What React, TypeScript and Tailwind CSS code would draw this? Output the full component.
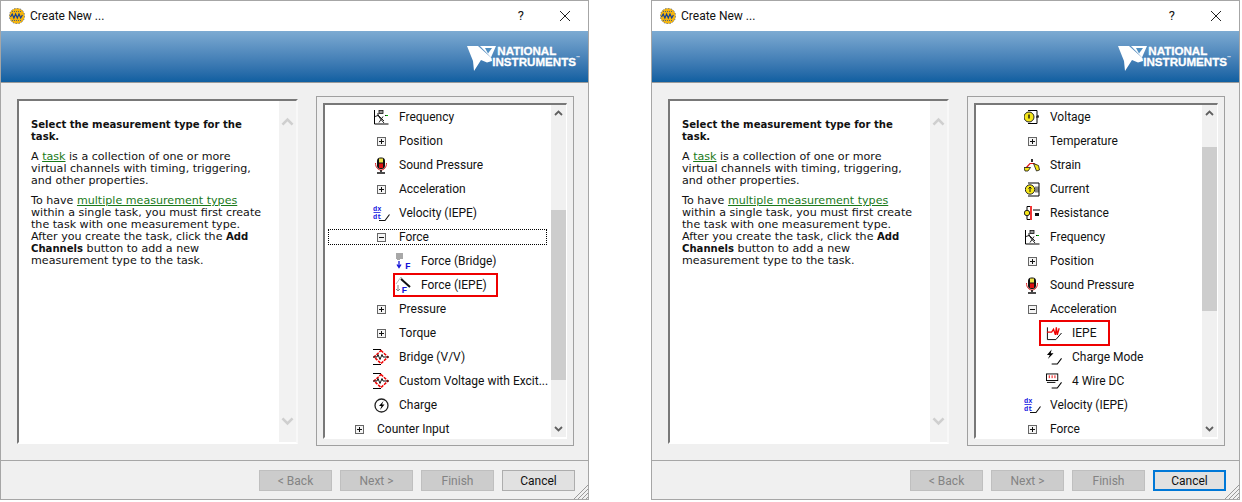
import type { ReactNode } from 'react';

type TreeRow = {
  label: string;
  level: 0 | 1 | 2;
  icon?: ReactNode;
  focused?: boolean;
  highlight?: string;
};

const PlusBox = ({ minus }: { minus?: boolean }) => (
  <svg width="9" height="9" viewBox="0 0 9 9">
    <rect x="0.5" y="0.5" width="8" height="8" fill="#f4f4f4" stroke="#666" />
    <path d={minus ? 'M2 4.5h5' : 'M2 4.5h5M4.5 2v5'} stroke="#111" />
  </svg>
);

const FrequencyIcon = () => (
  <svg width="16" height="16" viewBox="0 0 16 16">
    <path d="M1.5 1v14h14" fill="none" stroke="#000" />
    <path d="M2 7.5l3-1 3 4 3 3.500M5 6l6 6M10 7.500l-4 6" fill="none" stroke="#222" />
    <rect x="6" y="1.5" width="4" height="3" fill="#999" stroke="#111" strokeWidth="0.8" />
    <path d="M5 4v3M12 6.500h3" stroke="#111" />
    <path d="M13 6.500h2" stroke="#0a0" />
  </svg>
);

const MicIcon = () => (
  <svg width="16" height="17" viewBox="0 0 16 17">
    <rect x="4" y="0.500" width="8" height="11.500" rx="3.500" fill="#111" />
    <rect x="6" y="1.500" width="4" height="4" fill="#ece24a" />
    <path d="M6 6.500h4v4.500H6z" fill="#d11" />
    <path d="M2.500 6c0 4.500 2.500 7 5.500 7s5.500-2.500 5.500-7" fill="none" stroke="#d11" strokeWidth="0.900" />
    <path d="M8 13v2M4 16h8" stroke="#111" strokeWidth="1.600" />
  </svg>
);

const VelocityIcon = () => (
  <svg width="17" height="16" viewBox="0 0 17 16" className="overflow-visible">
    <text x="0" y="6" fontSize="7" fontWeight="700" fontFamily="Liberation Mono, monospace" fill="#1414e0">dx</text>
    <path d="M0.500 7.500h7" stroke="#1414e0" strokeWidth="0.800" />
    <text x="0" y="14" fontSize="7" fontWeight="700" fontFamily="Liberation Mono, monospace" fill="#1414e0">dt</text>
    <path d="M6 15.500h6l4.500-6" fill="none" stroke="#111" strokeWidth="1.100" />
  </svg>
);

const ForceBridgeIcon = () => (
  <svg width="17" height="16" viewBox="0 0 17 16" className="overflow-visible">
    <path d="M1 0h7v6H5v1H2V6H1z" fill="#a8a8a8" />
    <path d="M4 8v6M2 11.500l2 3 2-3" fill="none" stroke="#1414d8" strokeWidth="1.300" />
    <text x="10" y="15.500" fontSize="9.500" fontWeight="700" fontFamily="Liberation Mono, monospace" fill="#1414d8">F</text>
  </svg>
);

const ForceIepeIcon = () => (
  <svg width="16" height="16" viewBox="0 0 16 16" className="overflow-visible">
    <path d="M6 0L1 7M6 0l2 3" fill="none" stroke="#bbb" />
    <path d="M6 2l9 8" stroke="#111" strokeWidth="2" />
    <path d="M3 8v6M1 12l2 2 2-2" fill="none" stroke="#888" />
    <text x="6.500" y="16" fontSize="9.500" fontWeight="700" fontFamily="Liberation Mono, monospace" fill="#1414d8">F</text>
  </svg>
);

const BridgeIcon = () => (
  <svg width="16" height="16" viewBox="0 0 16 16">
    <path d="M0 0.500h8M0 15.500h8" stroke="#000" />
    <path d="M8 1.500l7 6.500-7 6.500L1 8z" fill="#fff" stroke="#e00" strokeWidth="1.500" strokeDasharray="3 1" />
    <path d="M0 8h4l1-2.500 2 5 2-5 1 2.500h6" fill="none" stroke="#111" />
  </svg>
);

const ChargeIcon = () => (
  <svg width="15" height="15" viewBox="0 0 15 15">
    <circle cx="7.500" cy="7.500" r="6.500" fill="none" stroke="#222" strokeWidth="1.300" />
    <path d="M9.500 3L5 8h2.500L6 12l4.500-5.500H8z" fill="#000" />
  </svg>
);

const VoltageIcon = () => (
  <svg width="16" height="16" viewBox="0 0 16 16">
    <path d="M4 1.500h9v13H4" fill="none" stroke="#000" />
    <circle cx="5" cy="8" r="5" fill="#f5e61a" stroke="#222" />
    <path d="M5 5.500v4" stroke="#000" strokeWidth="1.300" />
    <path d="M14 6v2M12 8h3" stroke="#000" />
  </svg>
);

const StrainIcon = () => (
  <svg width="16" height="13" viewBox="0 0 16 13">
    <path d="M8 0v3" stroke="#000" strokeWidth="1.600" />
    <path d="M2 9l4-4.500h4l4 4.500" fill="none" stroke="#e01010" strokeWidth="1.200" />
    <path d="M0 8.500h6.500L4 12H1zM9.500 4.500l5 2 1 4.500-3 1z" fill="#f5e61a" stroke="#111" strokeWidth="0.800" />
  </svg>
);

const CurrentIcon = () => (
  <svg width="15" height="15" viewBox="0 0 15 15">
    <path d="M3 1h11v13H3" fill="none" stroke="#000" />
    <circle cx="5" cy="7.500" r="4.700" fill="#f5e61a" stroke="#222" />
    <path d="M5 5v5M3.500 6.500L5 5l1.500 1.500M11 4.500v6M13 4.500v6" fill="none" stroke="#111" />
  </svg>
);

const ResistanceIcon = () => (
  <svg width="16" height="16" viewBox="0 0 16 16">
    <path d="M6 1.500H3v13h3" fill="none" stroke="#000" />
    <path d="M7 1v14" stroke="#e00" strokeWidth="1.600" />
    <circle cx="3" cy="8" r="2.700" fill="#f5e61a" stroke="#222" />
    <path d="M9 5h7" stroke="#000" />
    <rect x="11" y="8" width="4" height="3" fill="#111" />
  </svg>
);

const IepeIcon = () => (
  <svg width="17" height="16" viewBox="0 0 17 16">
    <path d="M1.500 2v13h9l6-7" fill="none" stroke="#000" />
    <path d="M1 7h5l2-3 2 6 1-8 1 8 2-7" fill="none" stroke="#e00" strokeWidth="1.400" />
  </svg>
);

const ChargeModeIcon = () => (
  <svg width="17" height="16" viewBox="0 0 17 16">
    <path d="M6 0L1 6h3L2 10l6-6H5z" fill="#000" />
    <path d="M6 15.500h6l4.500-6" fill="none" stroke="#000" strokeWidth="1.100" />
  </svg>
);

const FourWireIcon = () => (
  <svg width="17" height="16" viewBox="0 0 17 16">
    <rect x="0.500" y="0.500" width="12" height="7" fill="#fff" stroke="#000" />
    <path d="M3.500 2v3M6.500 2v3M9.500 2v3" stroke="#e00" />
    <path d="M1 9.500h9" stroke="#000" />
    <path d="M6 15.500h6l4.500-6" fill="none" stroke="#000" strokeWidth="1.100" />
  </svg>
);

const AppIcon = () => (
  <svg width="16" height="16" viewBox="0 0 16 16">
    <circle cx="8" cy="8" r="7.700" fill="#f5b50f" stroke="#123f96" strokeWidth="0.600" strokeDasharray="1.500 1.500" />
    <path d="M3 3.500h10M3 12.500h10" stroke="#1c4fa0" strokeWidth="0.800" strokeDasharray="1 1" />
    <path d="M1.500 9l1.700-3 1.700 4 1.700-4 1.700 4 1.700-4 1.700 4 1.700-3" fill="none" stroke="#123f96" strokeWidth="1.200" />
  </svg>
);

const NiLogo = () => (
  <div className="flex items-start">
    <svg width="29" height="27" viewBox="0 0 29 27" className="-mr-[4px] shrink-0">
      <path d="M0 0h11l13.500 12 .5 3-5 1.500-6-2.500-7 11-1-10L2 5z" fill="#fff" />
      <path d="M13 0h16l-5 11.500z" fill="#fff" />
      <path d="M18 2h7l-4 5.500z" fill="#4f8fc2" />
    </svg>
    <div className="-mt-[1px] font-['Liberation_Sans',sans-serif] text-[11.6px] leading-[11px] font-bold text-white [-webkit-text-stroke:0.3px_white]">
      <div className="ml-[5px]">NATIONAL</div>
      <div>
        INSTRUMENTS<span className="align-top text-[4px] leading-[4px] [-webkit-text-stroke:0]">™</span>
      </div>
    </div>
  </div>
);

const Chevron = ({ down, color = '#606060', size = 9 }: { down?: boolean; color?: string; size?: number }) => (
  <svg width={size} height={size} viewBox="0 0 9 9">
    <path d={down ? 'M1 3l3.500 3.500L8 3' : 'M1 6l3.500-3.500L8 6'} fill="none" stroke={color} strokeWidth="1.800" />
  </svg>
);

const Tree = ({ rows, spacer, thumb }: { rows: TreeRow[]; spacer: string; thumb: string }) => (
  <div className="flex h-[350px] w-[258px] border border-[#a0a0a0] bg-[#f0f0f0] p-[6px]">
    <div className="flex h-[336px] w-[244px] border-t-2 border-r border-b-2 border-l-2 border-t-[#787878] border-r-white border-b-white border-l-[#787878] bg-white">
      <div className="min-w-0 flex-1 overflow-hidden">
        {rows.map((row) => (
          <div key={row.label} className="relative flex h-6 items-center">
            {row.highlight && <div className={row.highlight} />}
            <div
              className={
                'ml-[3px] flex h-[16px] w-[219px] items-center gap-[10px] border border-dotted whitespace-nowrap ' +
                (row.focused ? 'border-black ' : 'border-transparent ') +
                (row.level === 0 ? 'pl-[22px]' : row.level === 1 ? 'pl-[44px]' : 'pl-[66px]')
              }
            >
              <span className="flex h-4 w-4 shrink-0 items-center justify-center">{row.icon}</span>
              <span className="font-['Roboto',sans-serif] text-[12px] text-[#111]">{row.label}</span>
            </div>
          </div>
        ))}
      </div>
      <div className="flex w-[15px] shrink-0 flex-col bg-[#f0f0f0]">
        <div className="flex h-[17px] shrink-0 items-center justify-center">
          <Chevron />
        </div>
        <div className={spacer} />
        <div className={thumb} />
        <div className="flex-1" />
        <div className="flex h-[17px] shrink-0 items-center justify-center">
          <Chevron down />
        </div>
      </div>
    </div>
  </div>
);

const HelpPanel = () => (
  <div className="mt-[3px] flex h-[345px] w-[281px] border-t-2 border-r-2 border-b-2 border-l-2 border-t-[#787878] border-r-[#f8f8f8] border-b-white border-l-[#787878] bg-white">
    <div className="flex-1 pt-[18px] pl-[12px] font-['DejaVu_Sans',sans-serif] text-[11.1px] leading-[12px] whitespace-nowrap text-[#111]">
      <p className="text-[10.1px] font-bold">
        Select the measurement type for the
        <br />
        task.
      </p>
      <p className="mt-2">
        A <span className="text-[#1a7a1a] underline">task</span> is a collection of one or more
        <br />
        virtual channels with timing, triggering,
        <br />
        and other properties.
      </p>
      <p className="mt-2">
        To have <span className="text-[#1a7a1a] underline">multiple measurement types</span>
        <br />
        within a single task, you must first create
        <br />
        the task with one measurement type.
        <br />
        After you create the task, click the <b className="text-[10.1px]">Add</b>
        <br />
        <b className="text-[10.1px]">Channels</b> button to add a new
        <br />
        measurement type to the task.
      </p>
    </div>
    <div className="flex w-[17px] shrink-0 flex-col items-center justify-between bg-[#f2f2f2] py-[15px]">
      <Chevron color="#cfcfcf" size={13} />
      <Chevron down color="#cfcfcf" size={13} />
    </div>
  </div>
);

const WizardButton = ({ label, disabled, focused }: { label: string; disabled?: boolean; focused?: boolean }) => (
  <div
    className={
      "flex h-[21px] w-[73px] items-center justify-center font-['Roboto',sans-serif] text-[12px] " +
      (disabled
        ? 'border border-[#bfbfbf] bg-[#cccccc] text-[#838383]'
        : focused
          ? 'border-2 border-[#0078d7] bg-[#e1e1e1] text-[#111]'
          : 'border border-[#adadad] bg-[#e1e1e1] text-[#111]')
    }
  >
    {label}
  </div>
);

const Dialog = ({
  rows,
  spacer,
  thumb,
  cancelFocused,
}: {
  rows: TreeRow[];
  spacer: string;
  thumb: string;
  cancelFocused?: boolean;
}) => (
  <div className="flex h-[500px] w-[589px] shrink-0 flex-col border border-[#a6a6a6] bg-[#f0f0f0]">
    <div className="flex h-[30px] shrink-0 items-center bg-white pr-[17px] pl-[8px]">
      <AppIcon />
      <span className="ml-[5px] flex-1 font-['Roboto',sans-serif] text-[12px] text-[#111]">Create New ...</span>
      <span className="mr-[35px] font-['Roboto',sans-serif] text-[13px] text-[#111]">?</span>
      <svg width="12" height="12" viewBox="0 0 12 12">
        <path d="M1 1l10 10M11 1L1 11" stroke="#222" strokeWidth="1" />
      </svg>
    </div>
    <div className="flex h-[51px] shrink-0 justify-end bg-gradient-to-b from-[#7dabd2] to-[#0e5fa1] pt-[15px] pr-[8px]">
      <NiLogo />
    </div>
    <div className="h-px shrink-0 bg-[#9a9a9a]" />
    <div className="flex flex-1 justify-between pt-[13px] pr-[14px] pl-[16px]">
      <HelpPanel />
      <Tree rows={rows} spacer={spacer} thumb={thumb} />
    </div>
    <div className="h-px shrink-0 bg-[#a6a6a6]" />
    <div className="relative flex h-[38px] shrink-0 justify-end gap-2 pt-[9px] pr-[13px]">
      <WizardButton label="< Back" disabled />
      <WizardButton label="Next >" disabled />
      <WizardButton label="Finish" disabled />
      <WizardButton label="Cancel" focused={cancelFocused} />
      <svg width="15" height="15" viewBox="0 0 15 15" className="absolute right-0 bottom-0">
        <path d="M15 1L1 15M15 5L5 15M15 9l-6 6M15 13l-2 2" stroke="#9a9a9a" />
      </svg>
    </div>
  </div>
);

const leftRows: TreeRow[] = [
  { label: 'Frequency', level: 1, icon: <FrequencyIcon /> },
  { label: 'Position', level: 1, icon: <PlusBox /> },
  { label: 'Sound Pressure', level: 1, icon: <MicIcon /> },
  { label: 'Acceleration', level: 1, icon: <PlusBox /> },
  { label: 'Velocity (IEPE)', level: 1, icon: <VelocityIcon /> },
  { label: 'Force', level: 1, icon: <PlusBox minus />, focused: true },
  { label: 'Force (Bridge)', level: 2, icon: <ForceBridgeIcon /> },
  {
    label: 'Force (IEPE)',
    level: 2,
    icon: <ForceIepeIcon />,
    highlight: 'absolute top-0 left-[68px] z-10 h-[24px] w-[105px] border-2 border-[#ee0000]',
  },
  { label: 'Pressure', level: 1, icon: <PlusBox /> },
  { label: 'Torque', level: 1, icon: <PlusBox /> },
  { label: 'Bridge (V/V)', level: 1, icon: <BridgeIcon /> },
  { label: 'Custom Voltage with Excit...', level: 1, icon: <BridgeIcon /> },
  { label: 'Charge', level: 1, icon: <ChargeIcon /> },
  { label: 'Counter Input', level: 0, icon: <PlusBox /> },
];

const rightRows: TreeRow[] = [
  { label: 'Voltage', level: 1, icon: <VoltageIcon /> },
  { label: 'Temperature', level: 1, icon: <PlusBox /> },
  { label: 'Strain', level: 1, icon: <StrainIcon /> },
  { label: 'Current', level: 1, icon: <CurrentIcon /> },
  { label: 'Resistance', level: 1, icon: <ResistanceIcon /> },
  { label: 'Frequency', level: 1, icon: <FrequencyIcon /> },
  { label: 'Position', level: 1, icon: <PlusBox /> },
  { label: 'Sound Pressure', level: 1, icon: <MicIcon /> },
  { label: 'Acceleration', level: 1, icon: <PlusBox minus /> },
  {
    label: 'IEPE',
    level: 2,
    icon: <IepeIcon />,
    highlight: 'absolute -top-[1px] left-[63px] z-10 h-[26px] w-[71px] border-2 border-[#ee0000]',
  },
  { label: 'Charge Mode', level: 2, icon: <ChargeModeIcon /> },
  { label: '4 Wire DC', level: 2, icon: <FourWireIcon /> },
  { label: 'Velocity (IEPE)', level: 1, icon: <VelocityIcon /> },
  { label: 'Force', level: 1, icon: <PlusBox /> },
];

export default function App() {
  return (
    <div className="flex h-[502px] w-[1242px] bg-white">
      <Dialog rows={leftRows} spacer="h-[88px] shrink-0" thumb="h-[170px] shrink-0 bg-[#cdcdcd]" />
      <div className="w-[62px] shrink-0" />
      <Dialog rows={rightRows} spacer="h-[25px] shrink-0" thumb="h-[164px] shrink-0 bg-[#cdcdcd]" cancelFocused />
    </div>
  );
}
